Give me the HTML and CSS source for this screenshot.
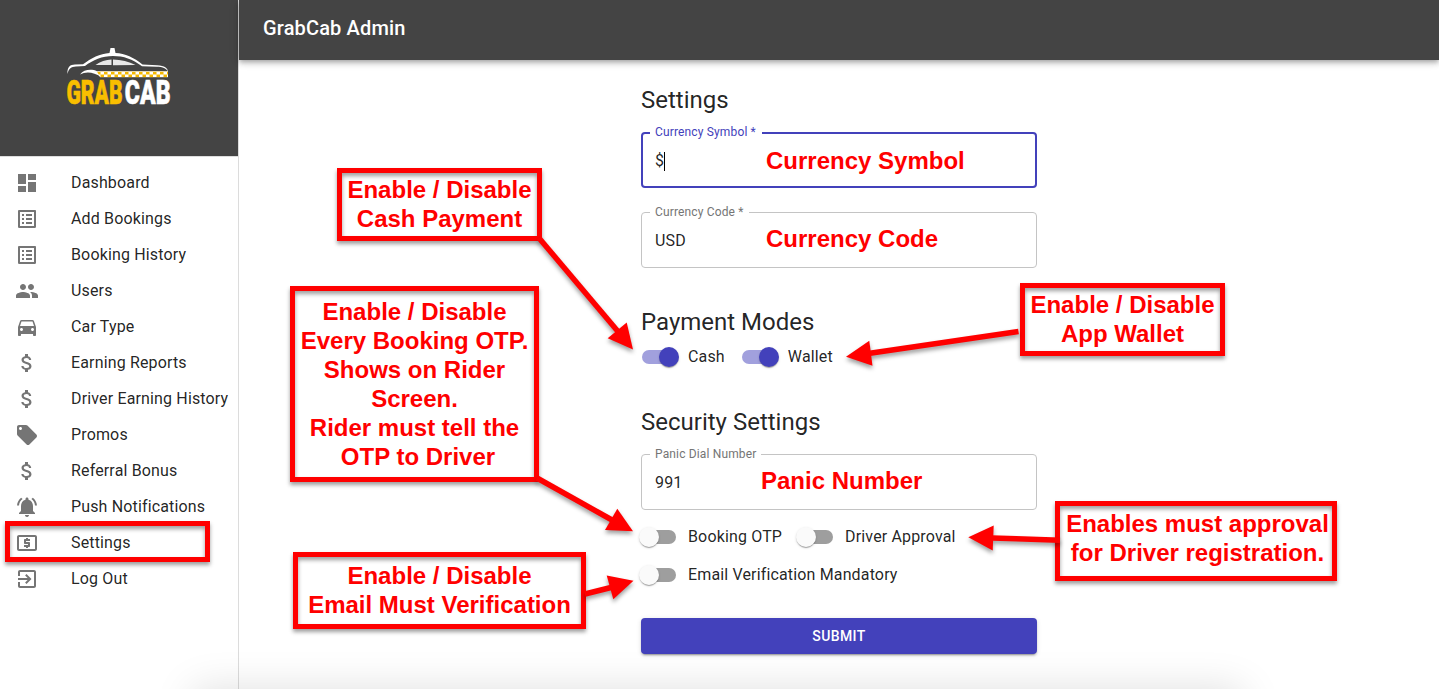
FILE: index.html
```html
<!DOCTYPE html>
<html lang="en">
<head>
<meta charset="utf-8">
<title>GrabCab Admin</title>
<link rel="stylesheet" href="styles.css">
</head>
<body>
<div class="app">
  <aside class="sidebar">
    <div class="brand">
      <svg class="logo" width="130" height="70" viewBox="0 0 130 70">
        <defs>
          <pattern id="checks" width="7" height="6" patternUnits="userSpaceOnUse" x="34" y="23.5">
            <rect width="7" height="6" fill="#fff"/>
            <rect width="3.5" height="3" fill="#f5b800"/>
            <rect x="3.5" y="3" width="3.5" height="3" fill="#f5b800"/>
          </pattern>
        </defs>
        <path d="M4.3 26C4.500 18.500 7 16.800 12 16.600L20 16.300C28 10 37 5.500 46.500 4.900L47.500 0H51.500L52.500 5C62 5.500 71 9.500 79.500 16.500L94 17.300C102 18 104.500 20 105 23.500C102 19.500 99 19 94 18.800L79 18.200C69 11 61 8 50 8C39 8 30 12 22 18L13 18.400C8 18.600 6 20.500 4.300 26Z" fill="#fff"/>
        <path d="M32.500 17C37 13.500 43 11.600 48.500 11.500V17ZM50 11.500C58 11.700 66 13.500 72.500 17L50 17.300Z" fill="#e8e8e8"/>
        <path d="M17 26.500C21 21 29 21 34 23.200L105 23.200V29H38C31 24 23 23 17 26.500Z" fill="#fff"/>
        <path d="M34 23.500H105V29.300H37Z" fill="url(#checks)"/>
        <text class="logo-text logo-grab" transform="translate(3.4 55.6) scale(.64 1)">GRAB</text>
        <text class="logo-text logo-cab" transform="translate(61.8 55.6) scale(.7 1)">CAB</text>
      </svg>
    </div>
    <nav class="menu">
      <a class="item"><svg class="icon" viewBox="0 0 24 24"><path d="M3 13h8V3H3v10zm0 8h8v-6H3v6zm10 0h8V11h-8v10zm0-18v6h8V3h-8z"/></svg>Dashboard</a>
      <a class="item"><svg class="icon" viewBox="0 0 24 24"><path d="M19 5v14H5V5h14m1.100-2H3.900c-.5 0-.9.4-.9.9v16.200c0 .4.4.9.9.9h16.200c.4 0 .9-.5.900-.9V3.900c0-.5-.5-.9-.9-.9zM11 7h6v2h-6V7zm0 4h6v2h-6v-2zm0 4h6v2h-6zM7 7h2v2H7zm0 4h2v2H7zm0 4h2v2H7z"/></svg>Add Bookings</a>
      <a class="item"><svg class="icon" viewBox="0 0 24 24"><path d="M19 5v14H5V5h14m1.100-2H3.900c-.5 0-.9.4-.9.9v16.200c0 .4.4.9.9.9h16.200c.4 0 .9-.5.900-.9V3.900c0-.5-.5-.9-.9-.9zM11 7h6v2h-6V7zm0 4h6v2h-6v-2zm0 4h6v2h-6zM7 7h2v2H7zm0 4h2v2H7zm0 4h2v2H7z"/></svg>Booking History</a>
      <a class="item"><svg class="icon" viewBox="0 0 24 24"><path d="M16 11c1.660 0 2.990-1.340 2.990-3S17.660 5 16 5c-1.660 0-3 1.340-3 3s1.340 3 3 3zm-8 0c1.660 0 2.990-1.340 2.990-3S9.660 5 8 5C6.340 5 5 6.340 5 8s1.340 3 3 3zm0 2c-2.330 0-7 1.170-7 3.500V19h14v-2.500c0-2.330-4.670-3.500-7-3.500zm8 0c-.29 0-.62.020-.97.050 1.160.84 1.970 1.970 1.970 3.450V19h6v-2.500c0-2.330-4.670-3.500-7-3.500z"/></svg>Users</a>
      <a class="item"><svg class="icon" viewBox="0 0 24 24"><path d="M18.920 6.010C18.720 5.420 18.160 5 17.500 5h-11c-.66 0-1.210.42-1.420 1.010L3 12v8c0 .55.450 1 1 1h1c.55 0 1-.45 1-1v-1h12v1c0 .55.450 1 1 1h1c.55 0 1-.45 1-1v-8l-2.080-5.990zM6.500 16c-.83 0-1.500-.67-1.500-1.500S5.670 13 6.500 13s1.500.67 1.500 1.500S7.330 16 6.500 16zm11 0c-.83 0-1.500-.67-1.500-1.500s.67-1.500 1.500-1.500 1.500.67 1.500 1.500-.67 1.500-1.500 1.500zM5 11l1.500-4.500h11L19 11H5z"/></svg>Car Type</a>
      <a class="item"><svg class="icon" viewBox="0 0 24 24"><path d="M11.800 10.900c-2.270-.59-3-1.200-3-2.150 0-1.090 1.010-1.850 2.700-1.850 1.780 0 2.440.85 2.500 2.100h2.210c-.07-1.720-1.120-3.300-3.210-3.810V3h-3v2.160c-1.940.42-3.500 1.680-3.500 3.610 0 2.310 1.910 3.460 4.700 4.130 2.500.6 3 1.480 3 2.410 0 .69-.49 1.790-2.700 1.790-2.060 0-2.870-.92-2.980-2.100h-2.200c.12 2.190 1.760 3.420 3.680 3.830V21h3v-2.150c1.950-.37 3.500-1.500 3.500-3.550 0-2.840-2.430-3.810-4.700-4.400z"/></svg>Earning Reports</a>
      <a class="item"><svg class="icon" viewBox="0 0 24 24"><path d="M11.800 10.900c-2.270-.59-3-1.200-3-2.150 0-1.090 1.010-1.850 2.700-1.850 1.780 0 2.440.85 2.500 2.100h2.210c-.07-1.720-1.120-3.300-3.210-3.810V3h-3v2.160c-1.940.42-3.500 1.680-3.500 3.610 0 2.310 1.910 3.460 4.700 4.130 2.500.6 3 1.480 3 2.410 0 .69-.49 1.790-2.700 1.790-2.060 0-2.870-.92-2.980-2.100h-2.200c.12 2.190 1.760 3.420 3.680 3.830V21h3v-2.150c1.950-.37 3.500-1.500 3.500-3.550 0-2.840-2.430-3.810-4.700-4.400z"/></svg>Driver Earning History</a>
      <a class="item"><svg class="icon" viewBox="0 0 24 24"><path d="M21.410 11.580l-9-9C12.050 2.220 11.550 2 11 2H4c-1.100 0-2 .9-2 2v7c0 .55.220 1.050.59 1.420l9 9c.36.36.86.58 1.410.58.550 0 1.050-.22 1.410-.59l7-7c.37-.36.59-.86.590-1.410 0-.55-.23-1.060-.59-1.420zM5.500 7C4.670 7 4 6.330 4 5.500S4.670 4 5.500 4 7 4.670 7 5.500 6.330 7 5.500 7z"/></svg>Promos</a>
      <a class="item"><svg class="icon" viewBox="0 0 24 24"><path d="M11.800 10.900c-2.270-.59-3-1.200-3-2.150 0-1.090 1.010-1.850 2.700-1.850 1.780 0 2.440.85 2.500 2.100h2.210c-.07-1.720-1.120-3.300-3.210-3.810V3h-3v2.160c-1.940.42-3.500 1.680-3.500 3.610 0 2.310 1.910 3.460 4.700 4.130 2.500.6 3 1.480 3 2.410 0 .69-.49 1.790-2.700 1.790-2.060 0-2.870-.92-2.980-2.100h-2.200c.12 2.190 1.760 3.420 3.680 3.830V21h3v-2.150c1.950-.37 3.500-1.500 3.500-3.550 0-2.840-2.430-3.810-4.700-4.400z"/></svg>Referral Bonus</a>
      <a class="item"><svg class="icon" viewBox="0 0 24 24"><path d="M7.580 4.080L6.150 2.650C3.750 4.480 2.170 7.300 2.030 10.500h2c.15-2.650 1.510-4.970 3.550-6.420zm12.390 6.420h2c-.15-3.200-1.730-6.020-4.120-7.850l-1.420 1.430c2.020 1.450 3.390 3.770 3.540 6.420zM18 11c0-3.070-1.640-5.640-4.500-6.320V4c0-.83-.67-1.500-1.500-1.500s-1.500.67-1.500 1.500v.68C7.630 5.360 6 7.920 6 11v5l-2 2v1h16v-1l-2-2v-5zm-6 11c.14 0 .27-.010.4-.040.650-.14 1.180-.58 1.440-1.180.1-.24.150-.5.150-.78h-4c.010 1.100.9 2 2.010 2z"/></svg>Push Notifications</a>
      <a class="item"><svg class="icon" viewBox="0 0 24 24"><path d="M11 17h2v-1h1c.55 0 1-.45 1-1v-3c0-.55-.45-1-1-1h-3v-1h4V8h-2V7h-2v1h-1c-.55 0-1 .45-1 1v3c0 .55.450 1 1 1h3v1H9v2h2v1zm9-13H4c-1.110 0-1.990.89-1.990 2L2 18c0 1.110.89 2 2 2h16c1.110 0 2-.89 2-2V6c0-1.110-.89-2-2-2zm0 14H4V6h16v12z"/></svg>Settings</a>
      <a class="item"><svg class="icon" viewBox="0 0 24 24"><path d="M10.090 15.590L11.500 17l5-5-5-5-1.410 1.410L12.670 11H3v2h9.670l-2.580 2.590zM19 3H5c-1.110 0-2 .9-2 2v4h2V5h14v14H5v-4H3v4c0 1.100.89 2 2 2h14c1.100 0 2-.9 2-2V5c0-1.100-.9-2-2-2z"/></svg>Log Out</a>
    </nav>
  </aside>

  <div class="page">
    <header class="topbar">GrabCab Admin</header>
    <main class="form">
      <h2 class="heading">Settings</h2>
      <div class="field field-focused">
        <span class="field-label">Currency Symbol *</span>
        <span class="field-value">$</span><span class="caret"></span>
      </div>
      <div class="field">
        <span class="field-label">Currency Code *</span>
        <span class="field-value">USD</span>
      </div>

      <h2 class="heading heading-payment">Payment Modes</h2>
      <div class="switches">
        <label class="control"><span class="switch on"><span class="thumb"></span></span>Cash</label>
        <label class="control"><span class="switch on"><span class="thumb"></span></span>Wallet</label>
      </div>

      <h2 class="heading heading-security">Security Settings</h2>
      <div class="field field-panic">
        <span class="field-label">Panic Dial Number</span>
        <span class="field-value">991</span>
      </div>
      <div class="switches">
        <label class="control"><span class="switch"><span class="thumb"></span></span>Booking OTP</label>
        <label class="control"><span class="switch"><span class="thumb"></span></span>Driver Approval</label>
        <label class="control"><span class="switch"><span class="thumb"></span></span>Email Verification Mandatory</label>
      </div>
      <button class="submit" type="button">SUBMIT</button>
    </main>
  </div>
</div>

<div class="bottom-edge"><div class="bottom-shade"></div></div>

<div class="notes">
  <div class="note note-settings"></div>
  <div class="note note-cash">Enable / Disable<br>Cash Payment</div>
  <div class="note note-otp">Enable / Disable<br>Every Booking OTP.<br>Shows on Rider<br>Screen.<br>Rider must tell the<br><span class="last-line">OTP to Driver</span></div>
  <div class="note note-email">Enable / Disable<br>Email Must Verification</div>
  <div class="note note-wallet">Enable / Disable<br>App Wallet</div>
  <div class="note note-driver">Enables must approval<br>for Driver registration.</div>
  <div class="caption caption-symbol">Currency Symbol</div>
  <div class="caption caption-code">Currency Code</div>
  <div class="caption caption-panic">Panic Number</div>
  <svg class="arrows" width="1439" height="689" viewBox="0 0 1439 689">
    <g stroke="#f00" stroke-width="5.500">
      <path d="M539 238L618 331.500"/>
      <path d="M537 478L612 520"/>
      <path d="M585 594L611 587.500"/>
      <path d="M1018.500 331.500L870 353.200"/>
      <path d="M1060 540.300L992 538"/>
    </g>
    <g fill="#f00">
      <path d="M633 349.500L607.700 338.300L626.700 322.500Z"/>
      <path d="M633 531.200L605 530L617.300 508.700Z"/>
      <path d="M633.500 580.700L606.700 575.500L613.300 599.300Z"/>
      <path d="M846 356.700L869.300 340.700L872.500 365.700Z"/>
      <path d="M968.300 537.300L993.700 525.600L992.700 550.400Z"/>
    </g>
  </svg>
</div>
</body>
</html>
```
FILE: styles.css
```css
* { box-sizing: border-box; }

body {
  margin: 0;
  height: 689px;
  overflow: hidden;
  background: #fff;
  color: rgba(0, 0, 0, .87);
  font: 16px/24px Roboto, "Liberation Sans", sans-serif;
  letter-spacing: .15px;
}

.app { display: flex; height: 689px; }

.sidebar {
  width: 239px;
  border-right: 1px solid #dcdcdc;
  background: #fff;
}

.brand {
  height: 157px;
  padding: 48px 0 0 63px;
  background: #444;
  border-bottom: 1px solid #ddd;
}

.logo { display: block; }
.logo-text { font: 900 33px Roboto, sans-serif; letter-spacing: 0; stroke-width: .6px; }
.logo-grab { fill: #f9be00; stroke: #f9be00; }
.logo-cab { fill: #fff; stroke: #fff; }

.menu { padding-top: 8px; }

.item {
  display: flex;
  align-items: center;
  gap: 32px;
  height: 36px;
  padding-left: 15px;
  white-space: nowrap;
}

.icon { width: 24px; height: 24px; fill: #757575; flex: none; }

.page { flex: 1; }

.topbar {
  height: 60px;
  padding-left: 24px;
  background: #444;
  color: #fff;
  font-size: 20px;
  font-weight: 500;
  line-height: 56px;
  box-shadow: 0 2px 4px -1px rgba(0, 0, 0, .2), 0 4px 5px rgba(0, 0, 0, .14), 0 1px 10px rgba(0, 0, 0, .12);
}

.form { width: 396px; margin: 24px 0 0 402px; }

.heading {
  margin: 0 0 16px;
  font-size: 24px;
  font-weight: 400;
  line-height: 32px;
  letter-spacing: 0;
}
.heading-payment { margin: 38px 0 0; }
.heading-security { margin-top: 30px; }

.field {
  position: relative;
  display: flex;
  align-items: center;
  height: 56px;
  margin-bottom: 24px;
  padding: 2px 0 0 13px;
  border: 1px solid #c4c4c4;
  border-radius: 4px;
}
.field-focused { border: 2px solid #4341bb; padding-left: 12px; }
.field-panic { margin-bottom: 8px; }

.field-label {
  position: absolute;
  left: 8px;
  top: -7px;
  padding: 0 5px;
  background: #fff;
  color: #757575;
  font-size: 12px;
  line-height: 12px;
}
.field-focused .field-label { left: 7px; top: -8px; padding-right: 6px; color: #4341bb; }

.caret { width: 1px; height: 19px; background: #000; }

.switches { display: flex; flex-wrap: wrap; }

.control {
  display: flex;
  align-items: center;
  height: 38px;
  margin: 0 16px 0 1px;
}
.control + .control { margin-left: -11px; padding-left: 12px; }
.control:nth-child(3) { margin-left: 1px; padding-left: 0; }

.switch {
  display: flex;
  align-items: center;
  width: 34px;
  height: 14px;
  margin-right: 12px;
  border-radius: 7px;
  background: #9e9e9e;
}
.switch.on { background: #a1a0dd; justify-content: flex-end; }

.thumb {
  flex: none;
  width: 20px;
  height: 20px;
  margin: 0 -3px;
  border-radius: 50%;
  background: #fafafa;
  box-shadow: 0 2px 1px -1px rgba(0, 0, 0, .2), 0 1px 1px rgba(0, 0, 0, .14), 0 1px 3px rgba(0, 0, 0, .12);
}
.on .thumb { background: #4341bb; }

.submit {
  display: block;
  width: 100%;
  height: 36px;
  margin-top: 24px;
  padding: 0;
  border: 0;
  border-radius: 4px;
  background: #4341bb;
  color: #fff;
  font: 500 14px/24px Roboto, sans-serif;
  letter-spacing: .4px;
  box-shadow: 0 3px 1px -2px rgba(0, 0, 0, .2), 0 2px 2px rgba(0, 0, 0, .14), 0 1px 5px rgba(0, 0, 0, .12);
}

/* Soft shadow rising from the bottom edge of the window */
.bottom-edge {
  position: absolute;
  left: 0;
  top: 629px;
  width: 100%;
  height: 60px;
  overflow: hidden;
}
.bottom-shade {
  width: 1050px;
  height: 100px;
  margin: 60px 0 0 193px;
  box-shadow: 0 0 40px rgba(0, 0, 0, .13);
}

/* Annotation layer drawn over the page */
.notes {
  position: absolute;
  inset: 0;
  color: #f00;
  font: bold 24px/29px "Liberation Sans", Arial, sans-serif;
  letter-spacing: 0;
  text-align: center;
  white-space: nowrap;
}

.note {
  position: absolute;
  border: 5px solid #f00;
  padding-top: 2px;
  box-shadow: 0 3px 4px rgba(0, 0, 0, .38), inset 0 3px 4px rgba(0, 0, 0, .38);
}
.note-settings { left: 5px; top: 521px; width: 205px; height: 41px; }
.note-cash { left: 337px; top: 168px; width: 205px; height: 73px; }
.note-otp { left: 290px; top: 286px; width: 249px; height: 196px; padding-top: 6px; }
.note-email { left: 293px; top: 552px; width: 293px; height: 77px; padding-top: 4px; }
.note-wallet { left: 1020px; top: 283px; width: 205px; height: 73px; }
.note-driver { left: 1055px; top: 501px; width: 282px; height: 80px; padding: 3px 0 0 3px; }
.last-line { padding-left: 7px; }

.caption { position: absolute; }
.caption-symbol { left: 766px; top: 146px; }
.caption-code { left: 766px; top: 224px; }
.caption-panic { left: 761px; top: 466px; }

.arrows {
  position: absolute;
  left: 0;
  top: 0;
  filter: drop-shadow(0 3px 2px rgba(0, 0, 0, .38));
}
```
